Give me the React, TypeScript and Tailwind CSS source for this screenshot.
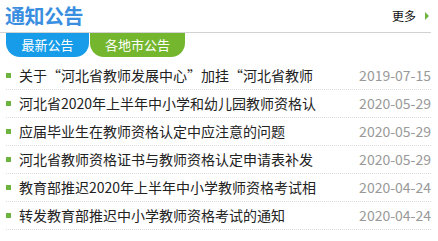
import React from 'react';

type Notice = {
  title: string;
  date: string;
};

const NOTICES: Notice[] = [
  { title: '关于“河北省教师发展中心”加挂“河北省教师', date: '2019-07-15' },
  { title: '河北省2020年上半年中小学和幼儿园教师资格认', date: '2020-05-29' },
  { title: '应届毕业生在教师资格认定中应注意的问题', date: '2020-05-29' },
  { title: '河北省教师资格证书与教师资格认定申请表补发', date: '2020-05-29' },
  { title: '教育部推迟2020年上半年中小学教师资格考试相', date: '2020-04-24' },
  { title: '转发教育部推迟中小学教师资格考试的通知', date: '2020-04-24' },
];

const NoticeRow = ({ item }: { item: Notice }) => (
  <li className="flex items-center h-[28px] border-b border-dotted border-[#dcdcdc]">
    <span className="w-[5px] h-[5px] bg-[#6db33f] shrink-0" />
    <span className="ml-[8px] flex-1 overflow-hidden whitespace-nowrap text-[14px] text-[#222]">
      {item.title}
    </span>
    <span className="text-[14px] text-[#999] shrink-0">{item.date}</span>
  </li>
);

const App: React.FC = () => {
  return (
    <div className="w-[438px] h-[241px] bg-white font-['Noto_Sans_CJK_SC',sans-serif] overflow-hidden">
      {/* header */}
      <div className="flex items-center justify-between w-[431px] h-[33px] border-b border-[#d2d2d2]">
        <h2 className="pl-[5px] text-[20px] font-bold leading-none text-[#3a8ee0] tracking-[-0.5px]">
          通知公告
        </h2>
        <a className="flex items-center gap-[9px] text-[12px] text-[#111] leading-none pr-[2px]">
          更多
          <span className="w-0 h-0 border-y-[4px] border-y-transparent border-l-[4px] border-l-[#6db33f]" />
        </a>
      </div>

      {/* tabs */}
      <div className="flex ml-[6px]">
        <div className="w-[83px] h-[24px] flex items-center justify-center rounded-b-[14px] bg-[#179ce9] text-white text-[13px]">
          最新公告
        </div>
        <div className="ml-[1px] w-[95px] h-[24px] flex items-center justify-center rounded-b-[14px] bg-[#74b72f] text-white text-[13px]">
          各地市公告
        </div>
      </div>

      {/* list */}
      <ul className="ml-[6px] w-[425px] mt-[5px]">
        {NOTICES.map((n, i) => (
          <NoticeRow key={i} item={n} />
        ))}
      </ul>
    </div>
  );
};

export default App;
